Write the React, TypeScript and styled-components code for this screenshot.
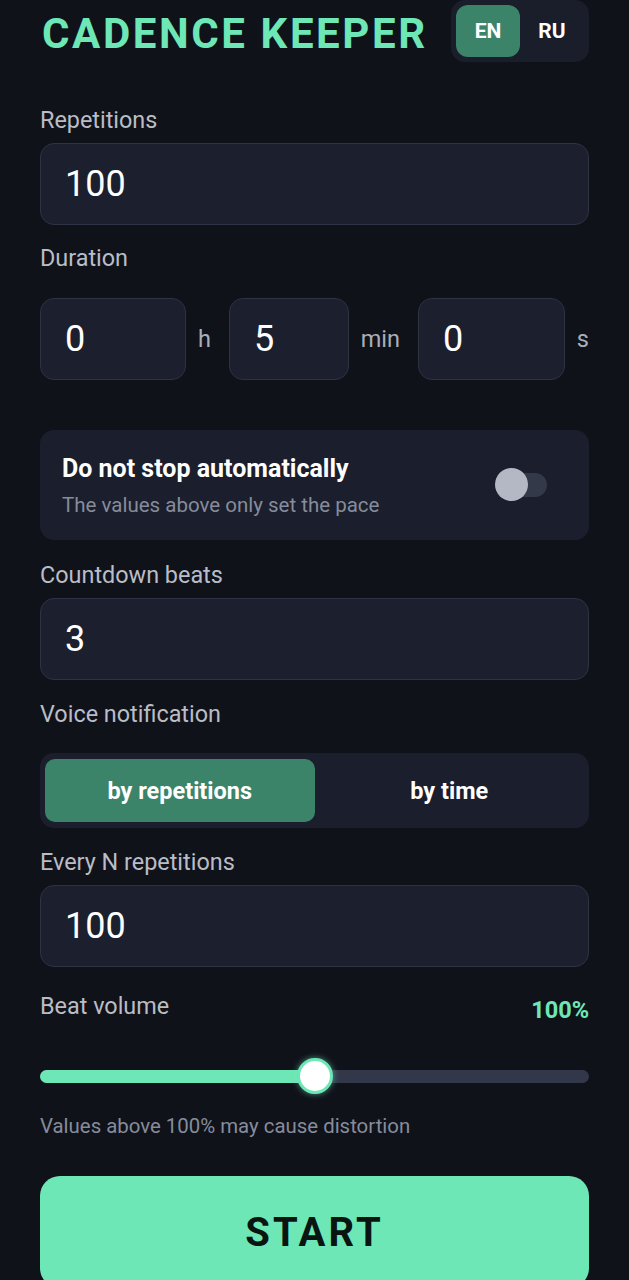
import React, { useState } from 'react';
import styled, { createGlobalStyle } from 'styled-components';

const GlobalStyle = createGlobalStyle`
  html, body {
    margin: 0;
    padding: 0;
    background: #10121a;
  }
  body {
    font-family: Roboto, "Noto Sans", "Liberation Sans", sans-serif;
    color: #ffffff;
  }
  * {
    box-sizing: border-box;
  }
`;

export default function App() {
  const [lang, setLang] = useState('en');
  const [mode, setMode] = useState('reps');
  const [keepGoing, setKeepGoing] = useState(false);
  const volume = 100;
  const volumePos = 50;

  return (
    <Page>
      <GlobalStyle />
      <Header>
        <Title>CADENCE KEEPER</Title>
        <LangSwitch>
          <LangBtn $active={lang === 'en'} onClick={() => setLang('en')}>EN</LangBtn>
          <LangBtn $active={lang === 'ru'} onClick={() => setLang('ru')}>RU</LangBtn>
        </LangSwitch>
      </Header>

      <Label $top={45}>Repetitions</Label>
      <Field defaultValue="100" />

      <Label $top={20}>Duration</Label>
      <DurationRow>
        <DurationGroup>
          <Field defaultValue="0" $mt={0} />
          <Unit>h</Unit>
        </DurationGroup>
        <DurationGroup>
          <Field defaultValue="5" $mt={0} />
          <Unit>min</Unit>
        </DurationGroup>
        <DurationGroup>
          <Field defaultValue="0" $mt={0} />
          <Unit>s</Unit>
        </DurationGroup>
      </DurationRow>

      <Card>
        <CardText>
          <CardTitle>Do not stop automatically</CardTitle>
          <CardHint>The values above only set the pace</CardHint>
        </CardText>
        <Switch $on={keepGoing} onClick={() => setKeepGoing(!keepGoing)}>
          <Knob $on={keepGoing} />
        </Switch>
      </Card>

      <Label $top={22}>Countdown beats</Label>
      <Field defaultValue="3" />

      <Label $top={21}>Voice notification</Label>
      <Segments>
        <Segment $active={mode === 'reps'} onClick={() => setMode('reps')}>by repetitions</Segment>
        <Segment $active={mode === 'time'} onClick={() => setMode('time')}>by time</Segment>
      </Segments>

      <Label $top={21}>Every N repetitions</Label>
      <Field defaultValue="100" />

      <VolumeRow>
        <VolumeLabel>Beat volume</VolumeLabel>
        <VolumeValue>{volume}%</VolumeValue>
      </VolumeRow>
      <Slider>
        <Track>
          <Fill style={{ width: `${volumePos}%` }} />
        </Track>
        <Thumb style={{ left: `${volumePos}%` }} />
      </Slider>
      <Hint>Values above 100% may cause distortion</Hint>

      <StartButton>START</StartButton>
    </Page>
  );
}

const Page = styled.div`
  display: flex;
  flex-direction: column;
  padding: 0 40px 40px;
  min-height: 1280px;
  background: #10121a;
`;

const Header = styled.div`
  display: flex;
  align-items: center;
  justify-content: space-between;
  height: 62px;
`;

const Title = styled.h1`
  margin: 6px 0 0 2px;
  font-size: 42px;
  font-weight: 700;
  letter-spacing: 2.6px;
  color: #6ee7b7;
  line-height: 1;
`;

const LangSwitch = styled.div`
  display: flex;
  align-items: center;
  padding: 5px;
  height: 62px;
  background: #1a1d2a;
  border-radius: 14px;
`;

const LangBtn = styled.button<{ $active?: boolean }>`
  width: 64px;
  height: 52px;
  border: none;
  border-radius: 12px;
  font-family: inherit;
  font-size: 21px;
  font-weight: 700;
  color: #ffffff;
  background: ${(p) => (p.$active ? '#3c8469' : 'transparent')};
  cursor: pointer;
`;

const Label = styled.div<{ $top: number }>`
  margin-top: ${(p) => p.$top}px;
  font-size: 23.4px;
  line-height: 26px;
  color: #b9bdc7;
`;

const Field = styled.input<{ $mt?: number }>`
  display: block;
  width: 100%;
  min-width: 0;
  height: 82px;
  margin-top: ${(p) => (p.$mt === undefined ? 10 : p.$mt)}px;
  padding: 0 24px;
  border: 1px solid #2d3244;
  border-radius: 14px;
  background: #1b1f2e;
  color: #ffffff;
  font-family: inherit;
  font-size: 36px;
  outline: none;
`;

const DurationRow = styled.div`
  display: flex;
  gap: 18px;
  margin-top: 27px;
`;

const DurationGroup = styled.div`
  flex: 1;
  display: flex;
  align-items: center;
  gap: 12px;
  min-width: 0;
`;

const Unit = styled.span`
  font-size: 23.5px;
  color: #a9aeb9;
`;

const Card = styled.div`
  display: flex;
  align-items: center;
  justify-content: space-between;
  height: 110px;
  margin-top: 50px;
  padding: 0 42px 0 22px;
  background: #1b1e2c;
  border-radius: 14px;
`;

const CardText = styled.div`
  display: flex;
  flex-direction: column;
  gap: 8px;
  padding-top: 2px;
`;

const CardTitle = styled.div`
  font-size: 25px;
  line-height: 30px;
  font-weight: 700;
  color: #ffffff;
`;

const CardHint = styled.div`
  font-size: 20.5px;
  line-height: 26px;
  color: #868c9b;
`;

const Switch = styled.div<{ $on: boolean }>`
  position: relative;
  width: 50px;
  height: 24px;
  border-radius: 12px;
  background: ${(p) => (p.$on ? '#3c8469' : '#343949')};
  cursor: pointer;
`;

const Knob = styled.div<{ $on: boolean }>`
  position: absolute;
  top: -5px;
  left: ${(p) => (p.$on ? '18px' : '-2px')};
  width: 33px;
  height: 33px;
  border-radius: 50%;
  background: #b4b8c5;
`;

const Segments = styled.div`
  display: flex;
  height: 75px;
  margin-top: 26px;
  padding: 6px 5px;
  background: #1b1e2c;
  border-radius: 14px;
`;

const Segment = styled.button<{ $active?: boolean }>`
  flex: 1;
  border: none;
  border-radius: 10px;
  font-family: inherit;
  font-size: 23.5px;
  font-weight: 700;
  color: #ffffff;
  background: ${(p) => (p.$active ? '#3c8469' : 'transparent')};
  cursor: pointer;
`;

const VolumeRow = styled.div`
  display: flex;
  align-items: flex-start;
  justify-content: space-between;
  height: 26px;
  margin-top: 26px;
`;

const VolumeLabel = styled.div`
  font-size: 23.4px;
  line-height: 26px;
  color: #b9bdc7;
`;

const VolumeValue = styled.div`
  font-size: 23.5px;
  line-height: 26px;
  font-weight: 700;
  color: #6ee7b7;
  margin-top: 4px;
`;

const Slider = styled.div`
  position: relative;
  display: flex;
  align-items: center;
  height: 36px;
  margin-top: 39px;
`;

const Track = styled.div`
  width: 100%;
  height: 13px;
  border-radius: 7px;
  background: #323849;
  overflow: hidden;
`;

const Fill = styled.div`
  height: 100%;
  background: #6ee7b7;
`;

const Thumb = styled.div`
  position: absolute;
  top: 0;
  width: 36px;
  height: 36px;
  margin-left: -18px;
  border-radius: 50%;
  background: #ffffff;
  border: 3px solid #6ee7b7;
  box-shadow: 0 0 6px rgba(110, 231, 183, 0.6);
`;

const Hint = styled.div`
  margin-top: 20px;
  font-size: 20.4px;
  line-height: 24px;
  color: #868c9b;
`;

const StartButton = styled.button`
  height: 112px;
  margin-top: 38px;
  border: none;
  border-radius: 20px;
  background: #6ee7b7;
  color: #0a1410;
  font-family: inherit;
  font-size: 40px;
  font-weight: 700;
  letter-spacing: 3px;
  cursor: pointer;
`;
